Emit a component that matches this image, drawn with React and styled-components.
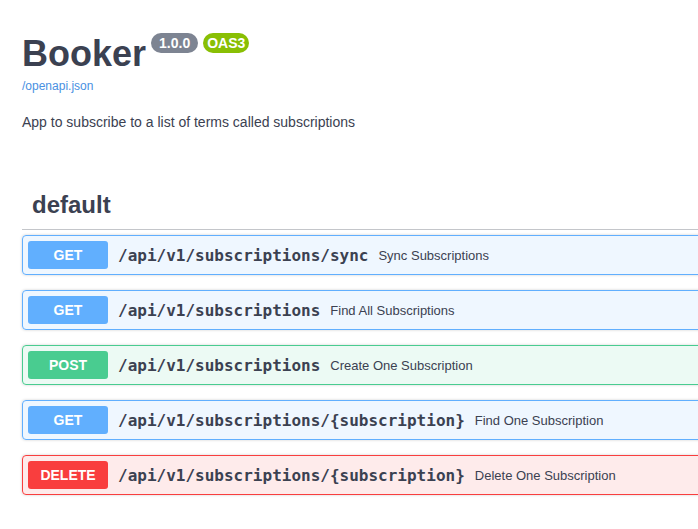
import styled, { createGlobalStyle } from "styled-components";

const GlobalStyle = createGlobalStyle`
  html, body {
    margin: 0;
    padding: 0;
    background: #fff;
    overflow: hidden;
  }
  body {
    font-family: "Liberation Sans", Arial, sans-serif;
    color: #3b4151;
  }
`;

const METHODS = {
  get: { color: "#61affe", bg: "rgba(97, 175, 254, 0.1)" },
  post: { color: "#49cc90", bg: "rgba(73, 204, 144, 0.1)" },
  delete: { color: "#f93e3e", bg: "rgba(249, 62, 62, 0.1)" },
};

const Wrapper = styled.div`
  width: 1000px;
  padding: 0 0 0 22px;
  box-sizing: border-box;
`;

const Info = styled.div`
  padding-top: 34px;
`;

const TitleRow = styled.div`
  display: flex;
  align-items: flex-start;
`;

const Title = styled.h2`
  margin: 0;
  font-size: 36px;
  line-height: 40px;
  font-weight: 700;
  color: #3b4151;
`;

const Stamp = styled.span`
  display: inline-block;
  margin: -1px 0 0 5px;
  padding: 2px ${(p) => p.$pad}px;
  border-radius: 57px;
  background: ${(p) => p.$bg};
  color: #fff;
  font-size: 14px;
  line-height: 16px;
  font-weight: 700;
`;

const SpecLink = styled.a`
  display: block;
  margin-top: 5px;
  font-size: 12px;
  line-height: 14px;
  color: #4990e2;
  text-decoration: none;
`;

const Description = styled.p`
  margin: 21px 0 0;
  font-size: 14px;
  line-height: 16px;
  color: #3b4151;
`;

const Section = styled.div`
  margin-top: 51px;
`;

const TagHeader = styled.h3`
  margin: 0 0 5px;
  padding: 10px 20px 10px 10px;
  font-size: 24px;
  line-height: 28px;
  font-weight: 700;
  color: #3b4151;
  border-bottom: 1px solid rgba(59, 65, 81, 0.3);
`;

const OpBlock = styled.div`
  display: flex;
  align-items: center;
  margin: 0 0 15px;
  padding: 5px;
  border: 1px solid ${(p) => METHODS[p.$method].color};
  background: ${(p) => METHODS[p.$method].bg};
  border-radius: 4px;
  box-shadow: 0 0 3px rgba(0, 0, 0, 0.19);
`;

const MethodBadge = styled.span`
  min-width: 80px;
  padding: 6px 0;
  border-radius: 3px;
  background: ${(p) => METHODS[p.$method].color};
  color: #fff;
  font-size: 14px;
  line-height: 16px;
  font-weight: 700;
  text-align: center;
`;

const Path = styled.span`
  padding: 0 10px;
  font-family: "DejaVu Sans Mono", monospace;
  font-size: 16px;
  font-weight: 700;
  color: #3b4151;
`;

const Summary = styled.span`
  font-size: 13px;
  color: #3b4151;
`;

const operations = [
  { method: "get", path: "/api/v1/subscriptions/sync", summary: "Sync Subscriptions" },
  { method: "get", path: "/api/v1/subscriptions", summary: "Find All Subscriptions" },
  { method: "post", path: "/api/v1/subscriptions", summary: "Create One Subscription" },
  { method: "get", path: "/api/v1/subscriptions/{subscription}", summary: "Find One Subscription" },
  { method: "delete", path: "/api/v1/subscriptions/{subscription}", summary: "Delete One Subscription" },
];

export default function App() {
  return (
    <>
      <GlobalStyle />
      <Wrapper>
        <Info>
          <TitleRow>
            <Title>Booker</Title>
            <Stamp $bg="#7d8492" $pad={8}>1.0.0</Stamp>
            <Stamp $bg="#89bf04" $pad={4}>OAS3</Stamp>
          </TitleRow>
          <SpecLink href="#">/openapi.json</SpecLink>
          <Description>App to subscribe to a list of terms called subscriptions</Description>
        </Info>
        <Section>
          <TagHeader>default</TagHeader>
          {operations.map((op, i) => (
            <OpBlock key={i} $method={op.method}>
              <MethodBadge $method={op.method}>{op.method.toUpperCase()}</MethodBadge>
              <Path>{op.path}</Path>
              <Summary>{op.summary}</Summary>
            </OpBlock>
          ))}
        </Section>
      </Wrapper>
    </>
  );
}
